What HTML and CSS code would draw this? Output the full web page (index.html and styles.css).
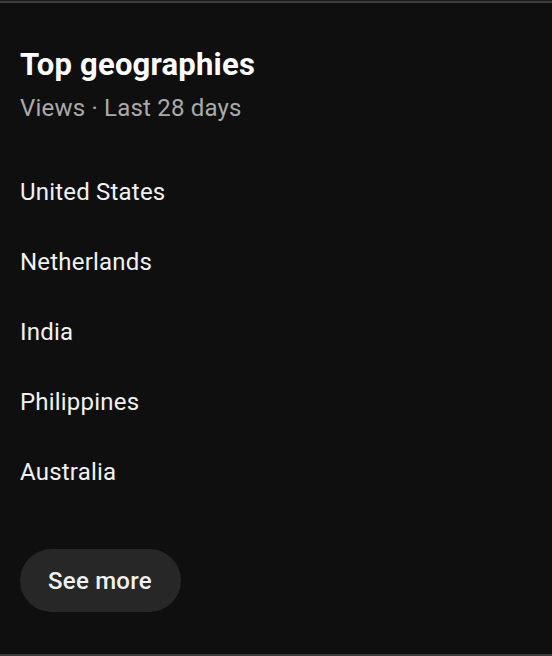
FILE: index.html
```html
<!DOCTYPE html>
<html lang="en">
<head>
    <meta charset="UTF-8">
    <meta name="viewport" content="width=device-width, initial-scale=1.0">
    <title>Top geographies</title>
    <link rel="stylesheet" href="styles.css">
</head>
<body>

    <div class="card">
        <h2 class="card-title">Top geographies</h2>
        <div class="card-subtitle">Views · Last 28 days</div>

        <ul class="geo-list">
            <li>United States</li>
            <li>Netherlands</li>
            <li>India</li>
            <li>Philippines</li>
            <li>Australia</li>
        </ul>

        <button class="see-more-btn">See more</button>
    </div>

</body>
</html>
```

FILE: styles.css
```css
html, body {
    height: 100%;
}

body {
    margin: 0;
    background: #0f0f0f;
    font-family: Roboto, "Liberation Sans", Arial, sans-serif;
    color: #f1f1f1;
    letter-spacing: 0.2px;
}

.card {
    box-sizing: border-box;
    height: 656px;
    border-top: 1px solid #1a1a1a;
    border-bottom: 2px solid #3a3a3a;
    box-shadow: inset 0 2px 0 #3d3d3d;
    padding: 44px 20px 0 20px;
}

.card-title {
    margin: 0;
    font-size: 31px;
    font-weight: 700;
    line-height: 40px;
    color: #fff;
}

.card-subtitle {
    margin-top: 8px;
    font-size: 24px;
    line-height: 30px;
    color: #aaa;
}

.geo-list {
    list-style: none;
    margin: 34px 0 0 0;
    padding: 0;
}

.geo-list li {
    font-size: 24px;
    line-height: 30px;
    padding: 20px 0;
    color: #f1f1f1;
}

.see-more-btn {
    margin-top: 42px;
    height: 63px;
    padding: 0 29px 0 28px;
    border: none;
    border-radius: 32px;
    background: #272727;
    color: #f1f1f1;
    font-family: Roboto, "Liberation Sans", Arial, sans-serif;
    font-size: 24px;
    font-weight: 500;
    letter-spacing: 0.25px;
    cursor: pointer;
}
```
